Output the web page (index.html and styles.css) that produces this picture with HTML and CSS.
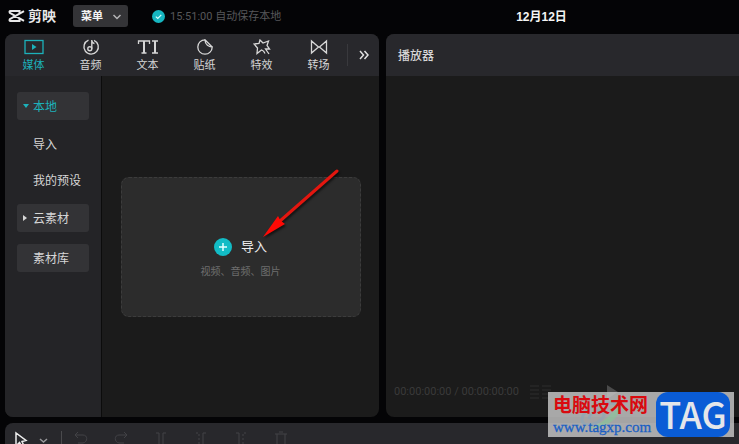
FILE: index.html
```html
<!DOCTYPE html>
<html lang="zh-CN">
<head>
    <meta charset="UTF-8">
    <meta name="viewport" content="width=device-width, initial-scale=1.0">
    <title>剪映</title>
    <link rel="stylesheet" href="styles.css">
</head>
<body>

    <header class="topbar">
        <div class="logo">
            <svg width="17" height="14" viewBox="0 0 17 14" fill="none" stroke="#e8e8e8" stroke-width="2">
                <path d="M11.500 4.500V2H2.500Q1 2 1.800 3.800L16 11.800M11.500 9.500V12H2.500Q1 12 1.800 10.200L16 2.200"/>
            </svg>
            <span>剪映</span>
        </div>
        <button class="menu-button" type="button">菜单
            <svg width="10" height="6" viewBox="0 0 10 6" fill="none" stroke="#b4b4b6" stroke-width="1.500"><path d="M1.500 1L5 4.500L8.500 1"/></svg>
        </button>
        <div class="save-status">
            <svg width="13" height="13" viewBox="0 0 13 13"><circle cx="6.500" cy="6.500" r="6.500" fill="#16b6c0"/><path d="M3.800 6.600L5.800 8.500L9.300 4.800" fill="none" stroke="#d8ffff" stroke-width="1.200"/></svg>
            <span>15:51:00 自动保存本地</span>
        </div>
        <h1 class="project-name">12月12日</h1>
    </header>

    <main class="workspace">
        <section class="panel">
            <nav class="tabs">
                <button class="tab active" type="button">
                    <svg width="20" height="16" viewBox="0 0 20 16" fill="none" stroke="currentColor" stroke-width="1.300"><rect x="1" y="1.500" width="18" height="13"/><path d="M8 5v6l4.500-3z" fill="currentColor" stroke="none"/></svg>
                    媒体
                </button>
                <button class="tab" type="button">
                    <svg width="18" height="16" viewBox="0 0 18 16" fill="none" stroke="currentColor" stroke-width="1.400"><path d="M6.500 1.200A7.200 7.200 0 1 0 12 1.300"/><circle cx="7.800" cy="9.800" r="2"/><path d="M9.800 9.800V1C9.900 3.500 11 4.300 12.500 4.500"/></svg>
                    音频
                </button>
                <button class="tab" type="button">
                    <svg width="22" height="16" viewBox="0 0 22 16" fill="none" stroke="currentColor" stroke-width="1.300"><path d="M1.500 5V2H12.500V5M4.500 14H9.500M15 2H21M15 14H21"/><path d="M7 2V14M18 2V14" stroke-width="2"/></svg>
                    文本
                </button>
                <button class="tab" type="button">
                    <svg width="18" height="16" viewBox="0 0 18 16" fill="none" stroke="currentColor" stroke-width="1.300"><path d="M9 .8A7.200 7.200 0 1 0 16.200 8C13 8 9 6 9 .8L16.200 8"/></svg>
                    贴纸
                </button>
                <button class="tab" type="button">
                    <svg width="18" height="16" viewBox="0 0 18 16" fill="none" stroke="currentColor" stroke-width="1.300"><path d="M10.500 12L8.500 11L4 14.500L4.500 9L1 5L6 4.500L7 1L10 4L15.500 2L14 6.500L16.500 10L12.500 10L16 15M10.500 12L12 14.500"/></svg>
                    特效
                </button>
                <button class="tab" type="button">
                    <svg width="18" height="16" viewBox="0 0 18 16" fill="none" stroke="currentColor" stroke-width="1.300"><path d="M1.500 2V14L8.500 8ZM16.500 2V14L9.500 8ZM8.500 8H9.500"/></svg>
                    转场
                </button>
                <button class="more-button" type="button" aria-label="更多">
                    <svg width="10" height="10" viewBox="0 0 10 10" fill="none" stroke="#e0e0e0" stroke-width="1.500"><path d="M1 1L4.500 5L1 9M5.500 1L9 5L5.500 9"/></svg>
                </button>
            </nav>
            <div class="panel-body">
                <aside class="sidebar">
                    <button class="side-item group open" type="button">本地</button>
                    <div class="side-children">
                        <button class="side-item" type="button">导入</button>
                        <button class="side-item" type="button">我的预设</button>
                    </div>
                    <div class="side-groups">
                        <button class="side-item group closed" type="button">云素材</button>
                        <button class="side-item group" type="button">素材库</button>
                    </div>
                </aside>
                <div class="media-area">
                    <div class="dropzone">
                        <button class="import-button" type="button">
                            <svg width="18" height="18" viewBox="0 0 18 18"><circle cx="9" cy="9" r="9" fill="#12bcc6"/><path d="M9 5v8M5 9h8" stroke="#e4ffff" stroke-width="1.500"/></svg>
                            导入
                        </button>
                        <p>视频、音频、图片</p>
                        <svg class="arrow" width="80" height="74" viewBox="0 0 80 74">
                            <path d="M75 4L18 54" stroke="#e3160f" stroke-width="3" stroke-linecap="round"/>
                            <path d="M1 70L16 49L18.500 53.500L23 57Z" fill="#ff0a05"/>
                        </svg>
                    </div>
                </div>
            </div>
        </section>

        <section class="panel player">
            <h2 class="player-title">播放器</h2>
            <div class="player-body">
                <div class="player-controls">
                    <span>00:00:00:00 / 00:00:00:00</span>
                    <svg width="22" height="16" viewBox="0 0 22 16" stroke="#242424" stroke-width="2"><path d="M0 2H9M0 6H9M0 10H9M0 14H9M12 2H21M12 6H21M12 10H21M12 14H21"/></svg>
                    <button class="play-button" type="button" aria-label="播放"><svg width="12" height="16" viewBox="0 0 12 16"><path d="M0 1L11 8L0 15Z" fill="#4b4b4b"/></svg></button>
                </div>
            </div>
        </section>
    </main>

    <footer class="timeline">
        <button type="button" aria-label="选择"><svg width="36" height="18" viewBox="0 0 36 18" fill="none"><path class="cursor" d="M2 2V15L5.500 11.500L8 16L10 15L8 10.500L12 9.500Z"/><path class="caret" d="M26 8L29.500 11L33 8"/></svg></button>
        <span class="divider"></span>
        <button type="button" aria-label="撤销"><svg width="14" height="16" viewBox="0 0 14 16"><path d="M4 1L1 4L4 7M1 4H9C14 4 14 11 9 12H4"/></svg></button>
        <button type="button" aria-label="恢复"><svg width="14" height="16" viewBox="0 0 14 16"><path d="M10 1L13 4L10 7M13 4H5C0 4 0 11 5 12H10"/></svg></button>
        <button type="button" aria-label="分割"><svg width="14" height="16" viewBox="0 0 14 16"><path d="M2 2H5V15H2M12 2H9V15H12"/></svg></button>
        <button type="button" aria-label="向左裁剪"><svg width="14" height="16" viewBox="0 0 14 16"><path d="M12 2H9V15H12"/><path d="M2 2H5V15H2" stroke-dasharray="2 2"/></svg></button>
        <button type="button" aria-label="向右裁剪"><svg width="14" height="16" viewBox="0 0 14 16"><path d="M2 2H5V15H2"/><path d="M12 2H9V15H12" stroke-dasharray="2 2"/></svg></button>
        <button type="button" aria-label="删除"><svg width="14" height="16" viewBox="0 0 14 16"><path d="M1 3H13M3 3V15H11V3M5 1H9"/></svg></button>
    </footer>

    <div class="watermark">
        <svg class="swirl" width="60" height="45" viewBox="0 0 60 45" fill="none">
            <path d="M54 5C58 24 44 36 22 37C38 31 50 20 54 5Z" fill="#86c89a"/>
            <path d="M50 12C34 8 17 18 16 27C15 36 31 34 38 24C38 15 24 19 23 27" stroke="#8ba6b8" stroke-width="3"/>
        </svg>
        <div class="site">
            <strong>电脑技术网</strong>
            <span>www.tagxp.com</span>
        </div>
        <div class="tag">TAG</div>
    </div>

</body>
</html>
```
FILE: styles.css
```css
* {
    box-sizing: border-box;
}

body {
    font-family: Roboto, "Noto Sans CJK SC", sans-serif;
    font-size: 12px;
    line-height: 16px;
    background-color: #040406;
    color: #d6d6d6;
    margin: 0;
    height: 100vh;
    overflow: hidden;
    display: grid;
    grid-template-rows: 34px 1fr 21px;
}

button {
    font: inherit;
    color: inherit;
    background: none;
    border: none;
    padding: 0;
    cursor: pointer;
}

svg {
    display: block;
    flex-shrink: 0;
}

h1, h2, p {
    margin: 0;
}

.topbar {
    display: flex;
    align-items: center;
    padding: 0 8px 2px;
}

.logo {
    display: flex;
    align-items: center;
    gap: 3px;
    width: 65px;
    font-size: 14px;
    font-weight: 700;
    color: #e8e8e8;
}

.menu-button {
    display: flex;
    align-items: center;
    justify-content: space-between;
    width: 55px;
    height: 22px;
    padding: 1px 6px 0 8px;
    border-radius: 3px;
    background-color: #343437;
    color: #f4f4f4;
    font-size: 11px;
    font-weight: 700;
}

.save-status {
    display: flex;
    align-items: center;
    gap: 5px;
    margin-left: 24px;
    font-size: 11px;
    color: #57575a;
}

.save-status span {
    padding-top: 2px;
}

.project-name {
    margin-left: 235px;
    padding-top: 1px;
    font-family: "Liberation Sans", "Noto Sans CJK SC", sans-serif;
    font-size: 12px;
    color: #f4f4f4;
}

.workspace {
    display: grid;
    grid-template-columns: 374fr 353fr;
    gap: 7px;
    padding: 0 0 6px 5px;
}

.panel {
    display: flex;
    flex-direction: column;
    border-radius: 8px;
    background-color: #1b1b1b;
    overflow: hidden;
}

.tabs {
    display: flex;
    height: 42px;
    background-color: #28282c;
    align-items: center;
}

.tab {
    display: flex;
    flex-direction: column;
    align-items: center;
    gap: 3px;
    width: 57px;
    padding-top: 3px;
    font-size: 11px;
}

.tab.active {
    color: #1cb1ba;
}

.more-button {
    display: flex;
    align-items: center;
    justify-content: center;
    flex: 1;
    height: 22px;
    border-left: 1px solid #39393d;
}

.panel-body {
    display: flex;
    flex: 1;
}

.sidebar {
    width: 97px;
    padding: 16px 12px;
    background-color: #242427;
    border-right: 1px solid #0c0c0c;
}

.side-item {
    display: flex;
    align-items: center;
    position: relative;
    width: 72px;
    height: 28px;
    padding: 2px 0 0 16px;
    border-radius: 3px;
}

.group {
    background-color: #333336;
}

.open {
    color: #1cb1ba;
}

/* expand markers sit in the left padding of the item */
.open::before,
.closed::before {
    content: "";
    position: absolute;
    left: 6px;
    border: 3px solid transparent;
}

.open::before {
    top: 12px;
    border-top: 4px solid #1cb1ba;
    border-bottom: none;
}

.closed::before {
    top: 11px;
    border-left: 4px solid #d6d6d6;
    border-right: none;
}

.side-children {
    display: grid;
    gap: 8px;
    margin: 10px 0;
}

.side-groups {
    display: grid;
    gap: 12px;
}

.media-area {
    display: flex;
    flex: 1;
    align-items: center;
    justify-content: center;
}

.dropzone {
    position: relative;
    display: flex;
    flex-direction: column;
    align-items: center;
    justify-content: center;
    gap: 8px;
    width: 240px;
    height: 140px;
    padding-top: 24px;
    border: 1px dashed #3c3c3c;
    border-radius: 8px;
    background-color: #2c2c2c;
}

.import-button {
    display: flex;
    align-items: center;
    gap: 9px;
    font-size: 13px;
    color: #ececec;
}

.dropzone p {
    font-size: 10px;
    color: #6e6e6e;
}

.arrow {
    position: absolute;
    left: 140px;
    top: -11px;
    filter: drop-shadow(1px 2px 1px rgba(0, 0, 0, 0.6));
}

.player {
    border-radius: 8px 0 0 8px;
}

.player-title {
    height: 42px;
    padding: 1px 0 0 12px;
    background-color: #28282c;
    font-size: 12px;
    font-weight: 500;
    line-height: 42px;
}

.player-body {
    display: flex;
    flex: 1;
    align-items: flex-end;
    padding: 0 8px 17px;
}

.player-controls {
    display: flex;
    align-items: center;
    gap: 11px;
    font-size: 11px;
    color: #3a3a3a;
}

.play-button {
    margin-left: 44px;
}

.timeline {
    display: flex;
    align-items: flex-start;
    gap: 26px;
    margin-left: 5px;
    padding: 8px 9px 0;
    border-radius: 8px 0 0 0;
    background-color: #28282c;
    overflow: hidden;
}

.timeline svg {
    fill: none;
    stroke: #424246;
    stroke-width: 1;
}

.timeline .cursor {
    stroke: #ececec;
    stroke-width: 1.5;
}

.timeline .caret {
    stroke: #97979a;
    stroke-width: 1.5;
}

.divider {
    width: 1px;
    height: 16px;
    margin: 0 -14px 0 -15px;
    background-color: #4a4a4d;
}

.watermark {
    position: absolute;
    right: 5px;
    bottom: 7px;
    display: flex;
    justify-content: space-between;
    width: 186px;
    height: 45px;
    padding: 0 4px 0 5px;
    background-color: rgba(196, 196, 196, 0.84);
}

.swirl {
    position: absolute;
    left: 18px;
    top: 0;
    opacity: 0.6;
}

.site {
    position: relative;
    display: flex;
    flex-direction: column;
    padding-top: 2px;
    font-size: 19px;
    line-height: 24px;
    color: #d90a0f;
}

.site span {
    font-family: "Liberation Serif", serif;
    font-size: 15px;
    line-height: 18px;
    color: #1a5fc4;
    -webkit-text-stroke: 0.3px #1a5fc4;
}

.tag {
    position: relative;
    width: 74px;
    border-radius: 12px;
    background-color: #0a5cd6;
    color: #e4e6ea;
    font-family: "Noto Sans CJK SC", sans-serif;
    font-size: 36px;
    font-weight: 500;
    line-height: 43px;
    text-align: center;
}
```
